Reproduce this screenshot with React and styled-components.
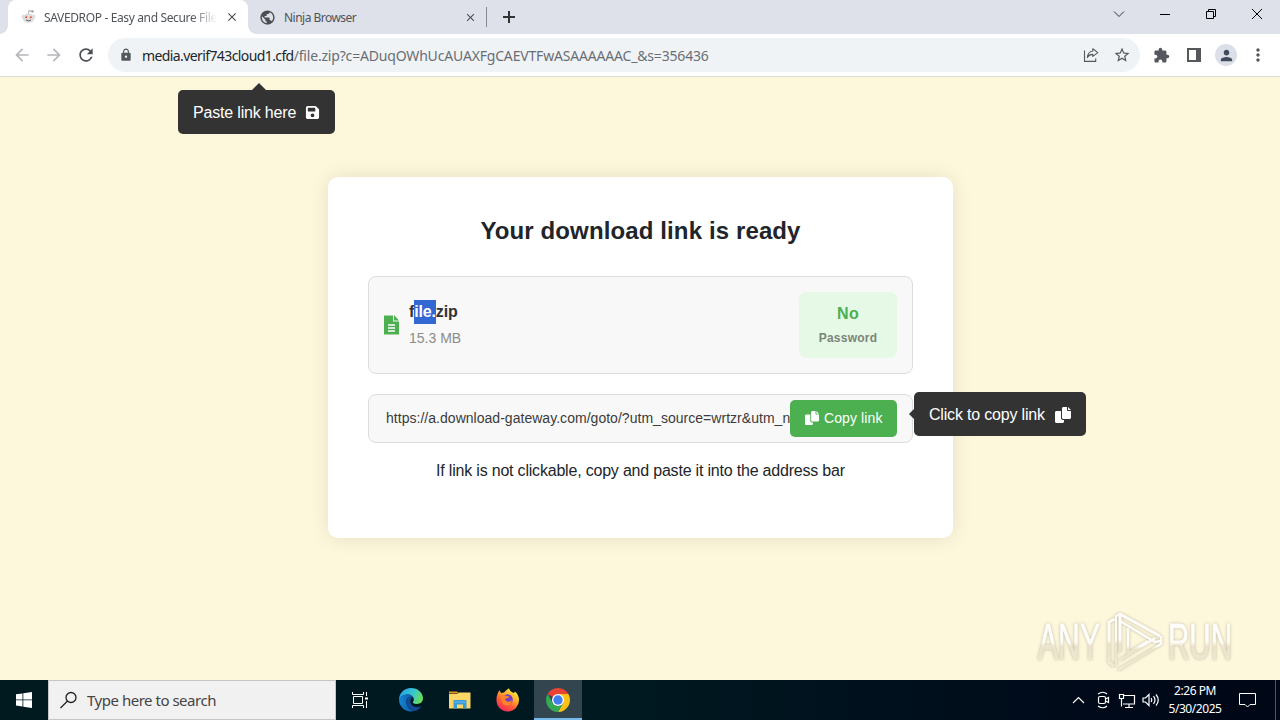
import React from 'react'
import styled, { createGlobalStyle } from 'styled-components'
import { MdArrowBack, MdArrowForward, MdRefresh, MdLock, MdStarOutline, MdExtension, MdPerson, MdMoreVert, MdPublic, MdClose } from 'react-icons/md'
import { FaFloppyDisk } from 'react-icons/fa6'

const GlobalStyle = createGlobalStyle`
  * {
    box-sizing: border-box;
  }
  body {
    margin: 0;
    overflow: hidden;
  }
  svg {
    display: block;
    flex-shrink: 0;
  }
`

const Screen = styled.div`
  width: 1280px;
  height: 720px;
  display: flex;
  flex-direction: column;
  font-family: 'Liberation Sans', Arial, sans-serif;
`

/* browser window */
const TabStrip = styled.div`
  height: 34px;
  display: flex;
  align-items: center;
  padding-left: 8px;
  background: #dee1e9;
  font: 12px 'Noto Sans', sans-serif;
  color: #505358;
`

const Tab = styled.div`
  position: relative;
  width: ${props => props.$active ? '240px' : '238px'};
  height: 34px;
  display: flex;
  align-items: center;
  padding: 0 9px 0 ${props => props.$active ? '13px' : '11px'};
  border-radius: 8px 8px 0 0;
  background: ${props => props.$active ? '#fff' : 'transparent'};
  svg {
    color: #4b4e53;
  }
`

const TabCurve = styled.i`
  position: absolute;
  bottom: 0;
  ${props => props.$side}: -8px;
  width: 8px;
  height: 8px;
  background: radial-gradient(circle at ${props => props.$side} top, transparent 7.5px, #fff 8px);
`

const TabTitle = styled.span`
  flex: 1;
  margin: 0 8px;
  overflow: hidden;
  white-space: nowrap;
  letter-spacing: ${props => props.$spacing};
  ${props => props.$fade && 'mask-image: linear-gradient(90deg, #000 85%, transparent 100%);'}
`

const Divider = styled.div`
  width: 1px;
  height: 20px;
  margin-right: 16px;
  background: #85888e;
`

const WindowButtons = styled.div`
  display: flex;
  margin-left: auto;
  svg {
    width: 46px;
    height: 28px;
    margin-bottom: 6px;
  }
`

const Toolbar = styled.div`
  height: 43px;
  display: flex;
  align-items: center;
  padding: 0 12px 0 12px;
  background: #fff;
  border-bottom: 1px solid #dcdcd8;
  color: #54585d;
`

const NavButtons = styled.div`
  display: flex;
  gap: 12px;
  color: #b5b7ba;
  svg:last-child {
    color: #4b4e53;
  }
`

const AddressBar = styled.div`
  width: 1032px;
  height: 34px;
  display: flex;
  align-items: center;
  margin-left: 12px;
  padding: 0 9px 0 11px;
  border-radius: 17px;
  background: #f0f3f6;
`

const Url = styled.div`
  flex: 1;
  margin-left: 9px;
  font: 14px 'Noto Sans', sans-serif;
  color: #6a6e74;
  white-space: nowrap;
  letter-spacing: -0.18px;
  b {
    font-weight: 400;
    color: #22252a;
    letter-spacing: -0.6px;
  }
`

const BarIcons = styled.div`
  display: flex;
  align-items: center;
  gap: 14px;
`

const ToolbarIcons = styled(BarIcons)`
  margin-left: 13px;
  gap: 0;
  svg:nth-child(2) {
    margin: 0 14px 0 17px;
  }
  svg:last-child {
    margin-left: 11px;
  }
`

const Avatar = styled.div`
  width: 22px;
  height: 22px;
  display: grid;
  place-items: center;
  border-radius: 50%;
  background: #dcdfe8;
  color: #414b5d;
  && svg {
    margin: 0;
  }
`

/* web page */
const Page = styled.main`
  position: relative;
  flex: 1;
  padding-top: 100px;
  background: #fdf7dc;
`

const Card = styled.section`
  position: relative;
  width: 625px;
  height: 361px;
  margin-left: 328px;
  padding: 40px;
  border-radius: 10px;
  background: #fff;
  box-shadow: 0 0 20px rgba(0, 0, 0, 0.1);
  color: #212529;
`

const Title = styled.h1`
  margin: -1px 0 31px;
  font-size: 24px;
  line-height: 29px;
  text-align: center;
  letter-spacing: 0.12px;
`

const Box = styled.div`
  position: relative;
  height: ${props => props.$height};
  display: flex;
  align-items: center;
  padding: 0 15px;
  border: 1px solid #dcdcdc;
  border-radius: 8px;
  background: #f8f8f8;
`

const LinkBox = styled(Box)`
  margin-top: 20px;
`

const FileInfo = styled.div`
  flex: 1;
  margin: -2px 0 0 10px;
`

const FileName = styled.div`
  font-size: 16px;
  font-weight: 700;
  line-height: 24px;
  color: #333;
  letter-spacing: -0.15px;
  span {
    display: inline-block;
    background: #3367d1;
    color: #fff;
  }
`

const FileSize = styled.div`
  margin-top: 4px;
  font-size: 14px;
  line-height: 21px;
  color: #8c8c8c;
`

const Badge = styled.div`
  width: 98px;
  height: 66px;
  padding: 10px 0 0;
  border-radius: 8px;
  background: #e5f9e6;
  text-align: center;
  font-weight: 700;
  font-size: 12px;
  line-height: 24px;
  letter-spacing: 0.25px;
  color: #7b857b;
  strong {
    display: block;
    font-size: 16px;
    color: #4caf50;
  }
`

const LinkText = styled.div`
  flex: 1;
  margin: -1px 0 0 2px;
  overflow: hidden;
  white-space: nowrap;
  font-size: 14px;
  letter-spacing: 0.03px;
  color: #3b3b3b;
`

const CopyButton = styled.button`
  width: 107px;
  height: 37px;
  display: flex;
  align-items: center;
  gap: 5px;
  padding: 0 0 1px 15px;
  border: 0;
  border-radius: 5px;
  background: #4caf50;
  color: #fff;
  font: 14px 'Liberation Sans', Arial, sans-serif;
  letter-spacing: 0.1px;
  white-space: nowrap;
`

const Hint = styled.p`
  margin: 16px 0 0;
  font-size: 16px;
  line-height: 24px;
  text-align: center;
  letter-spacing: -0.2px;
`

const Tooltip = styled.div`
  position: absolute;
  left: ${props => props.$left};
  top: ${props => props.$top};
  width: ${props => props.$width};
  height: 44px;
  display: flex;
  align-items: center;
  justify-content: space-between;
  padding: 1px 15px 0;
  border-radius: 5px;
  background: #333;
  color: #fff;
  font-size: 16px;
  letter-spacing: -0.18px;
  white-space: nowrap;
  &::before {
    content: '';
    position: absolute;
    border: ${props => props.$arrow === 'up' ? '7px' : '5px'} solid transparent;
    ${props => props.$arrow === 'up'
      ? 'left: 74px; bottom: 100%; border-bottom-color: #333;'
      : 'right: 100%; top: 17px; border-right-color: #333;'}
  }
`

const Watermark = styled.div`
  position: absolute;
  right: 42px;
  bottom: 6px;
  opacity: 0.85;
  filter: drop-shadow(0 0 1.5px rgba(110, 100, 80, 0.5));
`

/* taskbar */
const Taskbar = styled.footer`
  height: 40px;
  display: flex;
  align-items: center;
  background: linear-gradient(90deg, #001a20 0%, #001820 50%, #000a1a 85%, #000716 100%);
  color: #fff;
`

const TaskButton = styled.div`
  width: ${props => props.$width || '49px'};
  height: 40px;
  display: grid;
  place-items: center;
  background: ${props => props.$active ? '#33464f' : 'transparent'};
  box-shadow: ${props => props.$active ? 'inset 0 -2px #76b9ed' : 'none'};
`

const Search = styled.div`
  width: 288px;
  height: 40px;
  display: flex;
  align-items: center;
  gap: 9px;
  padding-left: 10px;
  border: 1px solid #c5c6c6;
  background: #f1f1f1;
  color: #444;
  font: 15px 'Noto Sans', sans-serif;
  letter-spacing: -0.48px;
`

const Tray = styled.div`
  display: flex;
  align-items: center;
  margin-left: auto;
  height: 40px;
`

const Clock = styled.div`
  width: 72px;
  font: 12px/18px 'Noto Sans', sans-serif;
  letter-spacing: -0.45px;
  text-align: center;
`

const ActionCenter = styled.svg`
  margin-left: 8px;
`

const ShowDesktop = styled.div`
  width: 5px;
  height: 40px;
  margin-left: 19px;
  border-left: 1px solid #4c5562;
`

const RedditIcon = () => (
  <svg width="15" height="16" viewBox="0 0 15 16">
    <path d="M7.500 5 8 1.500l3 .7" fill="none" stroke="#aaa" />
    <circle cx="11.500" cy="2.400" r="1.200" fill="#999" />
    <circle cx="2.300" cy="7.500" r="1.700" fill="#ddd" />
    <circle cx="12.700" cy="7.500" r="1.700" fill="#ddd" />
    <ellipse cx="7.500" cy="9.200" rx="6" ry="4.700" fill="#ddd" />
    <circle cx="5.200" cy="8.200" r="1" fill="#d8503f" />
    <circle cx="9.800" cy="8.200" r="1" fill="#d8503f" />
    <path d="M5 11q2.500 1.700 5 0" fill="none" stroke="#666" />
  </svg>
)

const ShareIcon = () => (
  <svg width="16" height="16" viewBox="0 0 16 16" fill="none" stroke="currentColor" strokeWidth="1.100">
    <path d="M1.500 3.500v10.900h11.200v-3" />
    <path d="M9.800 1.800 14.800 5.600 9.800 9.400V7.400Q6.200 7.300 4.300 10.600 5 4.700 9.800 4Z" strokeLinejoin="round" />
  </svg>
)

const PanelIcon = () => (
  <svg width="14" height="14" viewBox="0 0 14 14">
    <path fill="currentColor" fillRule="evenodd" d="M0 0h14v14H0zM2 2v10h7V2z" />
  </svg>
)

const FileIcon = () => (
  <svg width="15" height="20" viewBox="0 0 15 20">
    <path d="M0 .5h9V6.500h6V19.500H0z" fill="#4caf50" />
    <path d="M10 0l5 5.500h-5z" fill="#4caf50" />
    <path d="M4 10h7M4 13h7M4 16h7" stroke="#fff" strokeWidth="1.400" />
  </svg>
)

const CopyIcon = ({ size }) => (
  <svg width={size} height={size} viewBox="0 0 512 512" fill="currentColor">
    <path d="M384 96V0H272c-26.500 0-48 21.500-48 48v288c0 26.500 21.500 48 48 48h192c26.500 0 48-21.500 48-48V128h-96c-17.600 0-32-14.400-32-32zM416 0v96h96zM192 352V128H48c-26.500 0-48 21.500-48 48v288c0 26.500 21.500 48 48 48h192c26.500 0 48-21.500 48-48v-48h-32c-35.300 0-64-28.700-64-64z" />
  </svg>
)

const EdgeIcon = () => (
  <svg width="24" height="24" viewBox="0 0 24 24">
    <defs>
      <linearGradient id="edgeTop" x1="0" x2="1" y1="0.2" y2="0.5">
        <stop offset="0" stopColor="#279fe3" />
        <stop offset="0.55" stopColor="#35c5d3" />
        <stop offset="1" stopColor="#6ddc5a" />
      </linearGradient>
      <linearGradient id="edgeLow" x1="0" x2="1">
        <stop offset="0" stopColor="#1686d7" />
        <stop offset="1" stopColor="#0c4e9c" />
      </linearGradient>
    </defs>
    <path d="M0 12C0 5 5 0 12 0s12 5 12 10.300c0 3.700-3 5.700-6 5.700-3.500 0-4.500-1.200-4.100-2 .8-1 .9-1.700.9-2.500C14.800 8.700 12 6.500 8.500 6.500 4 6.500.6 9.300 0 12z" fill="url(#edgeTop)" />
    <path d="M0 12C.6 8.700 4 6.500 8.500 6.500c3.300 0 5.700 1.700 6.200 4-1-1.200-2-1.500-3-1.300C8 9.500 7.500 12 7.500 14c0 4.500 3.500 8.500 8.500 8.800A12 12 0 0 1 0 12z" fill="url(#edgeLow)" />
    <path d="M11.700 9.200C8.500 9.500 7.500 12 7.500 14c0 4.900 4 8.800 8.500 9 2.900-1 5-2.600 6.300-4.800-5.400 2.500-10.900-.2-10.900-4.700 0-1.500.5-2.500 1.500-3.500z" fill="#124b96" />
  </svg>
)

const FolderIcon = () => (
  <svg width="22" height="20" viewBox="0 0 22 20">
    <path d="M0 1.500h8l2 2H0z" fill="#e59a1e" />
    <path d="M0 4h8l2-1.500H21.500v16H0z" fill="#fcd667" />
    <path d="M4.500 18.500v-7.500q0-1 1-1h11q1 0 1 1v7.500h-3.500v-4h-6v4z" fill="#3b9ad9" />
    <path d="M5.500 12h11" stroke="#67bcea" />
  </svg>
)

const FirefoxIcon = () => (
  <svg width="24" height="24" viewBox="0 0 24 24">
    <defs>
      <linearGradient id="fox" x1="0.8" y1="0" x2="0.2" y2="1">
        <stop offset="0" stopColor="#fff14a" />
        <stop offset="0.35" stopColor="#ffb12b" />
        <stop offset="0.65" stopColor="#ff5a36" />
        <stop offset="1" stopColor="#e72363" />
      </linearGradient>
    </defs>
    <path d="M1.500 6Q2.500 3.500 3.500 2.200L5 5l3-.5Q10 2 13 .3 14 4 18 5l1-1.500q4 3.500 4 8.500A11 11 0 0 1 .5 12.500Q.3 9 1.500 6z" fill="url(#fox)" />
    <circle cx="11.500" cy="11.500" r="5.300" fill="#7640c7" />
    <path d="M4.500 7q4-.5 6 1l3 .5q-1 2-4 2-1 2 1.500 3 3 .8 4.800-1.500Q15.500 17.500 11 17.500 6 17 5.500 12z" fill="#ff8426" />
  </svg>
)

const ChromeIcon = () => (
  <svg width="24" height="24" viewBox="0 0 24 24">
    <path d="M12 12 1.610 6A12 12 0 0 1 22.390 6z" fill="#ea4335" />
    <path d="M12 6H22.390A12 12 0 0 1 12 24L17.200 15z" fill="#fbc116" />
    <path d="M1.610 6 6.800 15A6 6 0 0 0 17.200 15L12 24A12 12 0 0 1 1.610 6z" fill="#34a853" />
    <circle cx="12" cy="12" r="6" fill="#fff" />
    <circle cx="12" cy="12" r="4.700" fill="#3f7ff0" />
  </svg>
)

const App = () => (
  <Screen>
    <GlobalStyle />
    <TabStrip>
      <Tab $active>
        <TabCurve $side="left" />
        <RedditIcon />
        <TabTitle $spacing="-0.36px" $fade>SAVEDROP - Easy and Secure File Sha</TabTitle>
        <MdClose size={14} />
        <TabCurve $side="right" />
      </Tab>
      <Tab>
        <MdPublic size={17} />
        <TabTitle $spacing="-0.52px">Ninja Browser</TabTitle>
        <MdClose size={13} />
      </Tab>
      <Divider />
      <svg width="12" height="12" viewBox="0 0 12 12" stroke="#333" strokeWidth="2">
        <path d="M6 0v12M0 6h12" />
      </svg>
      <WindowButtons>
        <svg viewBox="0 0 46 28" fill="none" stroke="#333"><path d="m18 11.500 5 5 5-5" /></svg>
        <svg viewBox="0 0 46 28" stroke="#000"><path d="M18 14.500h10" /></svg>
        <svg viewBox="0 0 46 28" fill="none" stroke="#000"><path d="M18.500 11.500h7v7h-7zM20.500 11v-1.500h7v7h-1.500" /></svg>
        <svg viewBox="0 0 46 28" stroke="#000"><path d="m18 9 10 10M28 9 18 19" /></svg>
      </WindowButtons>
    </TabStrip>
    <Toolbar>
      <NavButtons>
        <MdArrowBack size={20} />
        <MdArrowForward size={20} />
        <MdRefresh size={20} />
      </NavButtons>
      <AddressBar>
        <MdLock size={14} />
        <Url><b>media.verif743cloud1.cfd</b>/file.zip?c=ADuqOWhUcAUAXFgCAEVTFwASAAAAAAC_&amp;s=356436</Url>
        <BarIcons>
          <ShareIcon />
          <MdStarOutline size={18} />
        </BarIcons>
      </AddressBar>
      <ToolbarIcons>
        <MdExtension size={17} />
        <PanelIcon />
        <Avatar><MdPerson size={17} /></Avatar>
        <MdMoreVert size={20} />
      </ToolbarIcons>
    </Toolbar>
    <Page>
      <Tooltip $left="178px" $top="13px" $width="157px" $arrow="up">
        Paste link here
        <FaFloppyDisk size={15} />
      </Tooltip>
      <Card>
        <Title>Your download link is ready</Title>
        <Box $height="98px">
          <FileIcon />
          <FileInfo>
            <FileName>f<span>ile.</span>zip</FileName>
            <FileSize>15.3 MB</FileSize>
          </FileInfo>
          <Badge>
            <strong>No</strong>
            Password
          </Badge>
        </Box>
        <LinkBox $height="49px">
          <LinkText>https://a.download-gateway.com/goto/?utm_source=wrtzr&amp;utm_n</LinkText>
          <CopyButton>
            <CopyIcon size={14} />
            Copy link
          </CopyButton>
        </LinkBox>
        <Hint>If link is not clickable, copy and paste it into the address bar</Hint>
        <Tooltip $left="586px" $top="215px" $width="172px" $arrow="left">
          Click to copy link
          <CopyIcon size={16} />
        </Tooltip>
      </Card>
      <Watermark>
        <svg width="206" height="66" viewBox="0 0 206 66">
          <defs>
            <linearGradient id="mark" x1="0" x2="0" y1="0" y2="1">
              <stop offset="0" stopColor="#fff" />
              <stop offset="0.5" stopColor="#fff" />
              <stop offset="0.58" stopColor="#e8e1cb" />
              <stop offset="1" stopColor="#f0ead4" />
            </linearGradient>
          </defs>
          <g fill="url(#mark)" stroke="url(#mark)" strokeWidth="0.800" fontFamily="Liberation Sans, Arial, sans-serif" fontSize="50">
            <text x="6" y="51" textLength="62" lengthAdjust="spacingAndGlyphs">ANY</text>
            <text x="136" y="51" textLength="64" lengthAdjust="spacingAndGlyphs">RUN</text>
          </g>
          <g fill="none" stroke="url(#mark)" strokeWidth="3" strokeLinejoin="round">
            <path d="M83 11l-6 3v40l5 4M88 44V6l40 22" />
            <path d="M88 13 123 34l5-1M96 20v25l20-12M88 52l35-22M86 62l43-26V28" strokeWidth="2.500" />
            <path d="M84 58V8l4-2" strokeWidth="2" />
          </g>
        </svg>
      </Watermark>
    </Page>
    <Taskbar>
      <TaskButton $width="48px">
        <svg width="16" height="16" viewBox="0 0 16 16" fill="#fff">
          <path d="M0 2.300 6.500 1.400v6H0zM7.300 1.200 16 0v7.400H7.300zM0 8.300h6.500v6.200L0 13.600zM7.300 8.300H16V16l-8.700-1.200z" />
        </svg>
      </TaskButton>
      <Search>
        <svg width="19" height="18" viewBox="0 0 19 18" fill="none" stroke="#222" strokeWidth="1.300">
          <circle cx="12" cy="6.500" r="5" />
          <path d="m8.500 10-7 7" />
        </svg>
        Type here to search
      </Search>
      <TaskButton $width="48px">
        <svg width="17" height="18" viewBox="0 0 17 18" fill="none" stroke="#fff">
          <path d="M.5 1v2.500h11V1M.5 17v-2.500h11V17M1.500 5.500h9v7h-9zM14.500 1v4M14.500 10v7" />
          <path d="M13 6.500h3v2h-3z" fill="#fff" stroke="none" />
        </svg>
      </TaskButton>
      <TaskButton $width="54px"><EdgeIcon /></TaskButton>
      <TaskButton $width="44px"><FolderIcon /></TaskButton>
      <TaskButton $width="52px"><FirefoxIcon /></TaskButton>
      <TaskButton $width="48px" $active><ChromeIcon /></TaskButton>
      <Tray>
        <svg width="87" height="20" viewBox="0 0 87 20" fill="none" stroke="#fff" strokeWidth="1.200">
          <path d="m1 13 5.500-5.500L12 13" />
          <rect x="26.500" y="6.500" width="7" height="7" rx="1.500" />
          <path d="m33.500 9 3-1.500v5l-3-1.500M26 4q5-3.500 9 0M26 16q5 3.500 9 0" />
          <path d="M52 5.500h10.500v8.500H51M57 14v3M53 17.500h8M47.500 4.500h4v4h-4zM49.500 8.500v8" />
          <path d="M71 8h2.500L77 4.500v11L73.500 12H71zM79 8q1.500 2 0 4M81.500 6.200q3 3.800 0 7.600M84 4.500q4.500 5.500 0 11" />
        </svg>
        <Clock>2:26 PM<br />5/30/2025</Clock>
        <ActionCenter width="17" height="17" viewBox="0 0 17 17" fill="none" stroke="#fff">
          <path d="M.5 1.500h16v11H11L8.500 15 6 12.500H.5z" />
        </ActionCenter>
        <ShowDesktop />
      </Tray>
    </Taskbar>
  </Screen>
)

export default App
